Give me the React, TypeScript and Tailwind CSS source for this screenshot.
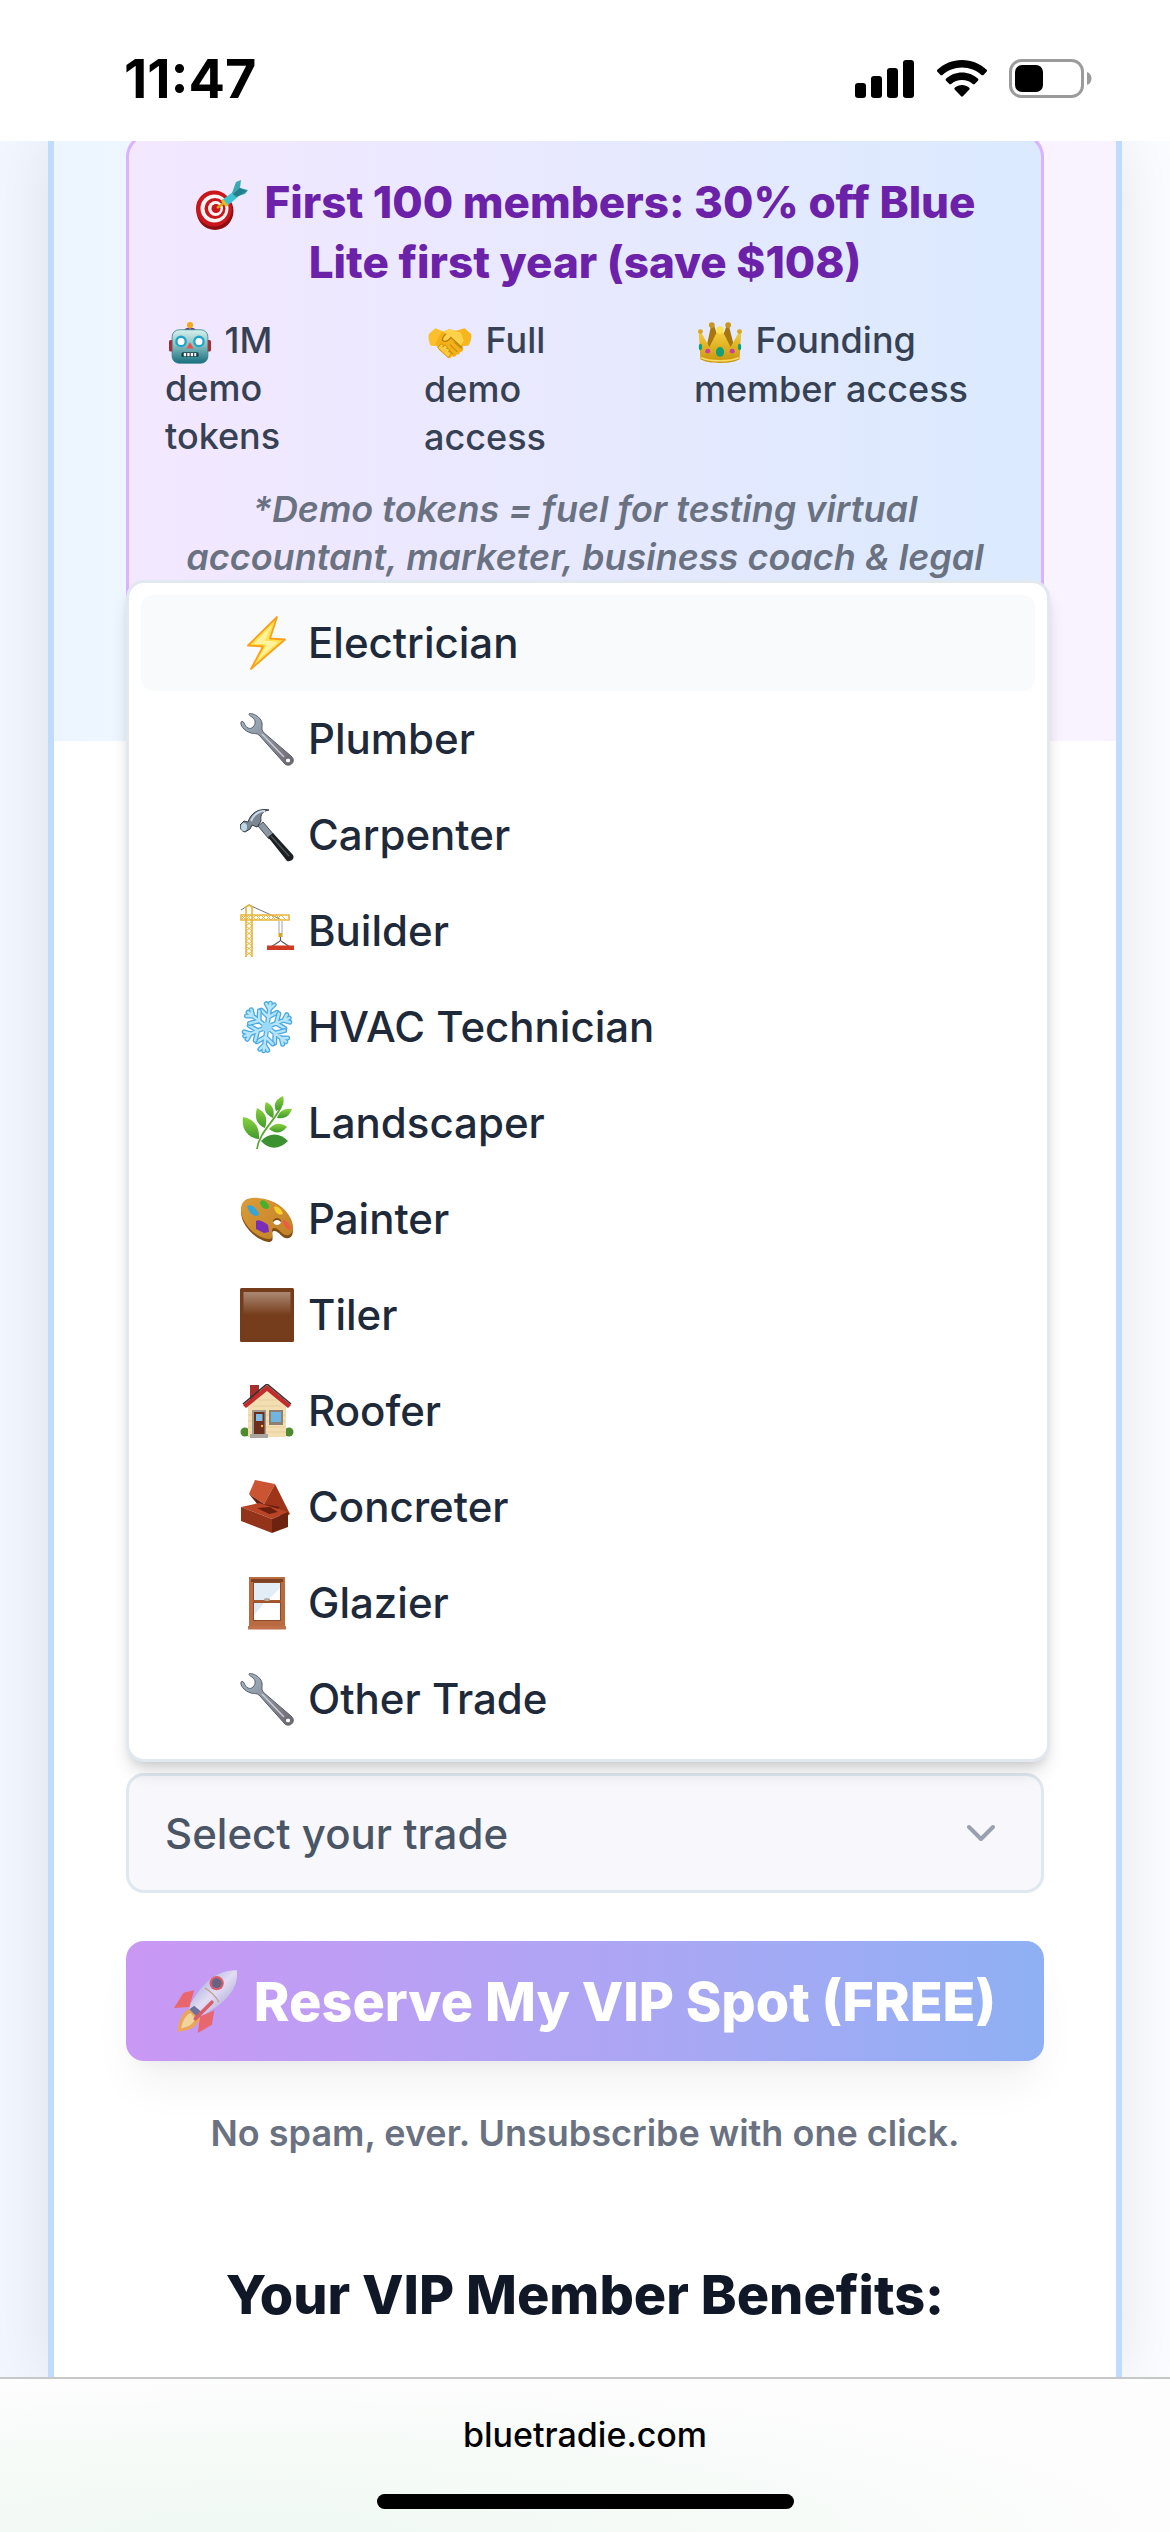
import type { ReactNode } from "react";
import { ChevronDown } from "lucide-react";

/* ---------- Pictograms (54 x 54 drawing grid) ---------- */

function Art({ className, children }: { className: string; children: ReactNode }) {
  return (
    <svg viewBox="0 0 54 54" className={className} aria-hidden="true">
      {children}
    </svg>
  );
}

const itemArt = "size-[54px] shrink-0";

function Target() {
  return (
    <Art className="mr-4 inline-block size-[54px] -my-2 align-middle">
      <ellipse cx="20" cy="32" rx="18.5" ry="19" fill="#8d0d10" />
      <ellipse cx="19" cy="29.500" rx="18" ry="18" fill="#c9151b" />
      <ellipse cx="19.500" cy="29.500" rx="14" ry="14" fill="#f7f4f4" />
      <ellipse cx="20" cy="29.500" rx="10.500" ry="10.500" fill="#c9151b" />
      <ellipse cx="20.500" cy="29.500" rx="7.500" ry="7.500" fill="#f7f4f4" />
      <ellipse cx="21" cy="29.500" rx="4.500" ry="4.500" fill="#c9151b" />
      <path d="M22 29l7-5" stroke="#d9a514" strokeWidth="2.500" />
      <path d="M27 21l5 6 11-9-5-5z" fill="#3cc4d3" />
      <path d="M26 22l5 6 2-2-5-6z" fill="#e8b923" />
      <path d="M37 14l4-11 5-2-1 8 8 2-3 4-10 3z" fill="#3aa9b4" />
      <path d="M38 15l7-6 7 3-10 6z" fill="#257e8b" />
    </Art>
  );
}

function Robot() {
  return (
    <Art className="mx-1 inline-block size-[42px] align-middle">
      <defs>
        <linearGradient id="robotHead" x1="0" y1="0" x2="0" y2="1">
          <stop offset="0" stopColor="#d6f1ee" />
          <stop offset="0.45" stopColor="#8ac0c1" />
          <stop offset="1" stopColor="#17707f" />
        </linearGradient>
      </defs>
      <rect x="0" y="23" width="6" height="15" rx="2" fill="#b5262b" />
      <rect x="48" y="23" width="6" height="15" rx="2" fill="#b5262b" />
      <ellipse cx="27" cy="10" rx="7" ry="3" fill="#56457c" />
      <rect x="25.500" y="5" width="3" height="5" fill="#8a6aa0" />
      <circle cx="27" cy="4" r="4" fill="#f7a81c" />
      <rect x="4" y="10" width="46" height="43" rx="9" fill="url(#robotHead)" stroke="#2d7c86" strokeWidth="1" />
      <circle cx="15.500" cy="25" r="6" fill="#fff" stroke="#22a4c9" strokeWidth="3" />
      <circle cx="38.500" cy="25" r="6" fill="#fff" stroke="#22a4c9" strokeWidth="3" />
      <path d="M27 26l4.500 8h-9z" fill="#e5534f" />
      <rect x="16" y="39" width="22" height="6" rx="2" fill="#173f49" />
      <path d="M19 42h16" stroke="#fff" strokeWidth="4" strokeDasharray="3 1.500" />
    </Art>
  );
}

function Handshake() {
  return (
    <Art className="mx-1 inline-block size-[44px] align-middle">
      <path d="M1 16l8-7 10 4-9 18-7-1C1 26 0 20 1 16z" fill="#fbc02b" />
      <path d="M53 16l-8-7-11 3 8 19 8-1c2-4 4-9 3-14z" fill="#f6b61d" />
      <path d="M9 28l5 8 11 9c2 1 4 0 4-2l2 1c2 0 4-1 4-3 2 1 5-1 4-3 3 0 5-2 4-5L38 13l-12-3-10 4z" fill="#f3b019" />
      <path d="M17 13l10-3 13 4 4 10-4 7-12-10c-4 4-9 5-11 2l5-8z" fill="#fdd24a" />
      <path d="M22 16c-4 3-5 7-4 8 3 2 7 0 10-4l14 13" fill="none" stroke="#b97908" strokeWidth="1.500" />
      <path d="M27 29l9 9M23 33l8 8M32 26l9 8" stroke="#c98a0c" strokeWidth="1.300" fill="none" />
      <path d="M12 33l3-4c2-2 5 0 3 3l2-2c3-1 4 2 3 4 3-1 4 2 2 4 3-1 4 2 2 4l-2 3z" fill="#fcca3b" stroke="#c98a0c" strokeWidth="1" />
    </Art>
  );
}

function Crown() {
  return (
    <Art className="mx-1 inline-block size-[44px] align-middle">
      <defs>
        <linearGradient id="crownGold" x1="0" y1="0" x2="0" y2="1">
          <stop offset="0" stopColor="#f7d33e" />
          <stop offset="1" stopColor="#c9930d" />
        </linearGradient>
      </defs>
      <path d="M10 34L16 6h4l7 22 8-22h3l7 28z" fill="#a87510" />
      <path d="M3 47L1 15l3-1 10 18L25 10h4l11 22 10-18 3 1-2 32c-8 6-40 6-48 0z" fill="url(#crownGold)" />
      <circle cx="3" cy="13" r="3" fill="#d9a520" />
      <circle cx="51" cy="13" r="3" fill="#d9a520" />
      <circle cx="17" cy="5" r="3.500" fill="#c9951a" />
      <circle cx="37" cy="5" r="3.500" fill="#c9951a" />
      <circle cx="27" cy="11" r="4.500" fill="#fbe34d" />
      <path d="M4 45c10 5 36 5 46 0" stroke="#f9dc62" strokeWidth="2" fill="none" />
      <ellipse cx="27" cy="38" rx="5" ry="6" fill="#149f77" />
      <circle cx="12" cy="37" r="3" fill="#c93fa2" />
      <circle cx="42" cy="37" r="3" fill="#c93fa2" />
      <ellipse cx="3" cy="32" rx="2" ry="4" fill="#149f77" />
      <ellipse cx="51" cy="32" rx="2" ry="4" fill="#149f77" />
    </Art>
  );
}

function Bolt() {
  return (
    <Art className={itemArt}>
      <path d="M37 1L8 29.500l15 1L11 53l34-29.500-15-1z" fill="#ffe04f" stroke="#f9a01b" strokeWidth="1.800" strokeLinejoin="round" />
      <path d="M32 9L14 27.500l13 1L18 44l20-18-13-1.500z" fill="#fff3a0" />
    </Art>
  );
}

function Wrench() {
  return (
    <Art className={itemArt}>
      <defs>
        <linearGradient id="wrenchSteel" x1="0" y1="0" x2="1" y2="1">
          <stop offset="0" stopColor="#a3b8c8" />
          <stop offset="0.5" stopColor="#8a8f9a" />
          <stop offset="1" stopColor="#71646c" />
        </linearGradient>
      </defs>
      <path
        fillRule="evenodd"
        d="M9 2c1-2 12 2 13 9 .500 4-1 6 1 9l28 24c6 5-1 12-6 8L19 23c-2-2-5-1-8-2C4 19 0 13 1 10c1-1 2-1 3 1 2 5 6 7 9 4 3-3 3-7-1-10C10 4 9 3 9 2zM48 46a2.500 2.500 0 1 0 .1 0z"
        fill="url(#wrenchSteel)"
        stroke="#555e69"
        strokeWidth="1"
      />
      <path d="M22 22l22 23" stroke="#c6ced7" strokeWidth="1.500" />
    </Art>
  );
}

function Hammer() {
  return (
    <Art className={itemArt}>
      <path d="M18 18l5-4 11 13-5 4z" fill="#8d97a3" stroke="#454d56" strokeWidth="1" />
      <path d="M28 29l5-4 20 22c2 4-2 7-6 6z" fill="#1c2022" />
      <path d="M31 28l18 20" stroke="#4d5356" strokeWidth="1.500" />
      <path d="M0 17l4-4 4 1C11 5 18 0 29 2c-6 1-9 4-8 11l-4 6-5-2-2 4-5 3c-4-1-5-4-5-7z" fill="#7c8793" stroke="#353c45" strokeWidth="1" />
      <path d="M11 13C14 6 19 3 25 3" stroke="#c9dbea" strokeWidth="2" fill="none" />
      <ellipse cx="4" cy="19" rx="3" ry="4" fill="#bdd7e8" />
    </Art>
  );
}

function Crane() {
  return (
    <Art className={itemArt}>
      <path d="M1 6l8-5 31 14" stroke="#777" strokeWidth="1" fill="none" />
      <g fill="none" stroke="#e8b53a" strokeWidth="1.600">
        <path d="M6 53V3l3-2 3 2v50M1 11h48v5H1z" />
        <path d="M6 17l6 5-6 5 6 5-6 5 6 5-6 5 6 5M12 17l-6 5 6 5-6 5 6 5-6 5 6 5-6 5" strokeWidth="1" />
        <path d="M1 11l5 5 5-5 5 5 5-5 5 5 5-5 5 5 5-5 5 5M1 16l5-5 5 5 5-5 5 5 5-5 5 5 5-5 5 5" strokeWidth="1" />
      </g>
      <path d="M39 17v12M42 17v12" stroke="#8a8a8a" strokeWidth="0.800" />
      <rect x="38.500" y="29" width="4" height="4" fill="#d0a528" />
      <path d="M40.500 33v4M40 37l-9 6M41 37l9 6" stroke="#5b5b5b" strokeWidth="1.200" />
      <rect x="27" y="41.500" width="27" height="4.500" fill="#d13a22" />
    </Art>
  );
}

function Snowflake() {
  return (
    <Art className={itemArt}>
      {[8, 68, 128, 188, 248, 308].map((angle) => (
        <g key={angle} transform={`rotate(${angle} 27 27)`} strokeLinecap="round" fill="none">
          <path d="M27 27V3M27 17l-8-6M27 17l8-6M27 9l-4-5M27 9l4-5" stroke="#4aa9e2" strokeWidth="5" />
          <path d="M27 27V3M27 17l-8-6M27 17l8-6M27 9l-4-5M27 9l4-5" stroke="#b5e5fb" strokeWidth="2.400" />
        </g>
      ))}
      <circle cx="27" cy="27" r="5" fill="#9ad9f8" />
    </Art>
  );
}

function Herb() {
  return (
    <Art className={itemArt}>
      <defs>
        <linearGradient id="herbLeaf" x1="0" y1="0" x2="0" y2="1">
          <stop offset="0" stopColor="#8bd13f" />
          <stop offset="1" stopColor="#3f9a2c" />
        </linearGradient>
      </defs>
      <path d="M17 53c2-16 16-26 24-42" stroke="#5aa832" strokeWidth="1.800" fill="none" />
      <g fill="url(#herbLeaf)">
        <path d="M43 0c2 8-1 13-7 15-3-7 0-12 7-15z" />
        <path d="M26 6c7 3 9 9 7 16-7-3-10-8-7-16z" />
        <path d="M52 13c-3 8-8 10-15 9 2-7 8-10 15-9z" />
        <path d="M17 12c9 4 11 11 8 20-8-3-11-10-8-20z" />
        <path d="M47 31c-6 7-12 7-18 2 5-6 12-7 18-2z" />
        <path d="M3 21c11 2 17 10 16 22C8 42 1 33 3 21z" />
        <path d="M48 45c-9 9-19 9-27 0 9-9 19-8 27 0z" fill="#3c9130" />
      </g>
    </Art>
  );
}

function Palette() {
  return (
    <Art className={itemArt}>
      <defs>
        <linearGradient id="paletteWood" x1="0" y1="0" x2="1" y2="1">
          <stop offset="0" stopColor="#dc9c38" />
          <stop offset="1" stopColor="#c07f26" />
        </linearGradient>
      </defs>
      <path
        fillRule="evenodd"
        d="M1 19C1 9 8 6 18 7c16 1 28 10 33 21 3 7 3 15-2 17-7 2-9-7-15-7-5 1 2 9-4 11C18 49 1 33 1 19zM37 27a4 3.500 0 1 0 .1 0z"
        fill="#7f4e14"
        transform="translate(0 1)"
      />
      <path
        fillRule="evenodd"
        d="M1 18C1 8 8 5 18 6c16 1 28 10 33 21 3 7 3 14-2 16-7 2-9-7-15-7-5 1 2 9-4 11C18 48 1 32 1 18zM37 26a4 3.500 0 1 0 .1 0z"
        fill="url(#paletteWood)"
      />
      <path d="M7 14c5-3 10 3 12 8-3 5-10 0-12-8z" fill="#36a5d8" />
      <path d="M20 10c3-4 7 0 9 4 0 5-8 4-9-4z" fill="#43b02f" />
      <path d="M34 15c4-2 8 3 9 7-4 2-8-1-9-7z" fill="#f4cf2e" />
      <path d="M16 29c3-2 8 1 12 4l1 7-5 1-8-4z" fill="#7a2db6" />
      <path d="M43 28c3-1 7 5 8 9-4 2-8-4-8-9z" fill="#ef5a45" />
    </Art>
  );
}

function BrownTile() {
  return (
    <Art className={itemArt}>
      <defs>
        <linearGradient id="tileShine" x1="0" y1="0" x2="0" y2="1">
          <stop offset="0" stopColor="#ab8873" />
          <stop offset="0.5" stopColor="#753d1b" />
        </linearGradient>
      </defs>
      <rect x="0" y="0" width="54" height="54" rx="1.500" fill="#743c1a" />
      <rect x="3.500" y="4" width="47" height="46" fill="url(#tileShine)" />
    </Art>
  );
}

function House() {
  return (
    <Art className={itemArt}>
      <circle cx="5" cy="48" r="4.500" fill="#4f8a2d" />
      <circle cx="49" cy="48" r="4.500" fill="#4f8a2d" />
      <rect x="10" y="1" width="9" height="16" fill="#a52f2c" />
      <path d="M8 53V21L27 4l19 17v32z" fill="#f3deb2" />
      <path d="M8 31h38M8 37h38M8 43h38M8 48h38M13 22h28M18 16h18" stroke="#e0c894" strokeWidth="0.700" />
      <path d="M3 21L27 1l24 20-3 3L27 7 6 24z" fill="#c32c2d" />
      <path d="M3 20L27 0l24 20" stroke="#37302f" strokeWidth="1.600" fill="none" />
      <rect x="12" y="26" width="14" height="25" fill="#a59a8e" />
      <rect x="14" y="28" width="10.500" height="22" fill="#6d2f1d" />
      <rect x="16" y="30" width="6.500" height="7" fill="#7cc1ea" />
      <circle cx="22" cy="42" r="1.200" fill="#f3b83a" />
      <rect x="29" y="26" width="14" height="15" fill="#8f8074" />
      <rect x="31" y="28" width="10" height="10" fill="#6fb5e0" />
      <rect x="10" y="50" width="18" height="4" fill="#aaa69f" />
    </Art>
  );
}

function Bricks() {
  return (
    <Art className={itemArt}>
      <path d="M15 0l20 4-11 20L9 14z" fill="#cb5433" />
      <path d="M35 4l15 30-6 4-20-14z" fill="#9f3518" />
      <path d="M9 14l15 10 16 3-8 8-14-10z" fill="#6b1e0e" />
      <path d="M1 27l18-4 29 9-16 7z" fill="#ba4526" />
      <path d="M1 27l31 12v14L1 41z" fill="#92331a" />
      <path d="M32 39l16-7v15l-16 6z" fill="#6d2310" />
      <path d="M17 28l13-1 8 5-9 2z" fill="#6b1e0e" />
    </Art>
  );
}

function WindowFrame() {
  return (
    <Art className={itemArt}>
      <rect x="9" y="1" width="36" height="50" fill="#b86a40" />
      <rect x="11" y="3" width="32" height="3" fill="#7e4122" />
      <rect x="13" y="6" width="28" height="39" fill="#8a4b2a" />
      <rect x="14" y="7" width="26" height="17" fill="#e3edf5" />
      <path d="M40 12v12H28z" fill="#fff" />
      <rect x="14" y="27" width="26" height="17" fill="#fff" />
      <path d="M14 27h10L14 39z" fill="#dde9f3" />
      <rect x="13" y="24" width="28" height="2.500" fill="#a5592f" />
      <ellipse cx="27" cy="23.500" rx="3" ry="1.500" fill="#b4aaa2" />
      <rect x="8" y="50" width="38" height="3.500" fill="#c0714a" />
    </Art>
  );
}

function Rocket() {
  return (
    <Art className="size-[64px] shrink-0 opacity-75">
      <defs>
        <linearGradient id="rocketBody" x1="0" y1="0" x2="1" y2="1">
          <stop offset="0" stopColor="#6f9ac4" />
          <stop offset="0.5" stopColor="#eef2f5" />
          <stop offset="1" stopColor="#7f96b4" />
        </linearGradient>
      </defs>
      <path d="M17 18L8 20 0 33l13-1z" fill="#f4573f" />
      <path d="M34 35l-2 12-12 7 2-14z" fill="#f4573f" />
      <path d="M14 33C6 37 4 44 3 53c9-1 16-3 19-11z" fill="#f7a928" />
      <path d="M14 37c-5 3-7 8-8 13 6-1 10-3 12-8z" fill="#ffe680" />
      <path d="M53 1c-16 0-27 8-39 28l-1 5 7 6 6-2C44 28 55 16 53 1z" fill="url(#rocketBody)" />
      <path d="M26 16c4 2 10 8 12 12" stroke="#b99c62" strokeWidth="1" fill="none" />
      <path d="M13 34l4-3 6 5-4 4z" fill="#50637a" />
      <circle cx="36" cy="12" r="6" fill="#e14b43" />
      <circle cx="36" cy="12" r="4.200" fill="#48525e" />
      <path d="M32 28l-14 14" stroke="#e0483a" strokeWidth="3" strokeLinecap="round" />
    </Art>
  );
}

/* ---------- Data ---------- */

const trades = [
  { name: "Electrician", Icon: Bolt },
  { name: "Plumber", Icon: Wrench },
  { name: "Carpenter", Icon: Hammer },
  { name: "Builder", Icon: Crane },
  { name: "HVAC Technician", Icon: Snowflake },
  { name: "Landscaper", Icon: Herb },
  { name: "Painter", Icon: Palette },
  { name: "Tiler", Icon: BrownTile },
  { name: "Roofer", Icon: House },
  { name: "Concreter", Icon: Bricks },
  { name: "Glazier", Icon: WindowFrame },
  { name: "Other Trade", Icon: Wrench },
];

/* ---------- Sections ---------- */

function StatusBar() {
  return (
    <header className="relative z-20 flex h-[141px] shrink-0 items-center justify-between bg-white pt-4 pr-[78px] pl-[124px] text-black">
      <span className="text-[54px] leading-[60px] font-bold">11:47</span>
      <div className="flex items-center gap-[22px]">
        <svg viewBox="0 0 60 38" className="h-[38px] w-[60px]" aria-hidden="true">
          <rect x="0" y="23" width="11" height="15" rx="3" />
          <rect x="16" y="16" width="11" height="22" rx="3" />
          <rect x="32" y="8" width="11" height="30" rx="3" />
          <rect x="48" y="0" width="11" height="38" rx="3" />
        </svg>
        <svg viewBox="0 0 50 37" className="h-[37px] w-[50px]" aria-hidden="true">
          <path d="M25 0C15.500 0 7 3.600.6 9.600c-.8.700-.8 1.500-.1 2.200l3 3.100c.7.600 1.300.6 2 0C10.700 10.300 17.500 7.500 25 7.500s14.300 2.800 19.500 7.400c.7.600 1.300.6 2 0l3-3.100c.7-.7.7-1.500-.1-2.200C43 3.600 34.500 0 25 0z" />
          <path d="M25 12.500c-6 0-11.600 2.300-15.800 6-.8.700-.8 1.500-.1 2.200l3.200 3.200c.6.600 1.200.6 1.900 0C17 21.500 20.800 20 25 20s8 1.500 10.800 3.900c.7.600 1.300.6 1.900 0l3.200-3.200c.7-.7.7-1.500-.1-2.200-4.200-3.700-9.800-6-15.800-6z" />
          <path d="M25 25c-2.700 0-5.100 1-7 2.500-.8.700-.8 1.500-.1 2.200l6 6.400c.7.700 1.500.7 2.200 0l6-6.400c.7-.7.7-1.500-.1-2.200C30.100 26 27.700 25 25 25z" />
        </svg>
        <svg viewBox="0 0 83 39" className="h-[39px] w-[83px]" aria-hidden="true">
          <rect x="1.500" y="1.500" width="72" height="36" rx="11" fill="none" stroke="#9b9b9b" strokeWidth="3" />
          <rect x="6" y="6" width="28" height="27" rx="7" />
          <path d="M78 13c6 2 6 11 0 13z" fill="#9b9b9b" />
        </svg>
      </div>
    </header>
  );
}

function Offer() {
  return (
    <section className="bg-linear-to-r from-[#edf6ff] to-[#f9f3ff] px-18 pb-[73px]">
      <div className="-mt-2 rounded-3xl border-3 border-purple-300 bg-linear-to-r from-purple-100 to-blue-100 px-9 pt-9 pb-21">
        <h2 className="px-6 text-center text-[44px] leading-[60px] font-extrabold text-[#6b21a8]">
          <Target />
          First 100 members: 30% off Blue Lite first year (save $108)
        </h2>
        <ul className="mt-6 grid grid-cols-[259fr_270fr_311fr] text-4xl leading-[48px] font-medium text-gray-700">
          <li className="pr-30">
            <Robot /> 1M demo tokens
          </li>
          <li className="pr-30">
            <Handshake /> Full demo access
          </li>
          <li>
            <Crown /> Founding member access
          </li>
        </ul>
        <p className="mt-6 text-center text-4xl leading-[48px] font-semibold text-gray-500 italic">
          *Demo tokens = fuel for testing virtual accountant, marketer, business coach &amp; legal
        </p>
      </div>
    </section>
  );
}

function TradeMenu() {
  return (
    <ul
      role="listbox"
      aria-label="Trades"
      className="absolute bottom-full left-0 z-10 mb-[11px] w-[calc(100%+6px)] rounded-[18px] border-3 border-slate-200 bg-white p-3 shadow-[0_12px_18px_-3px_rgba(0,0,0,0.14),0_6px_12px_-6px_rgba(0,0,0,0.14)]"
    >
      {trades.map(({ name, Icon }, index) => (
        <li key={name} role="option" aria-selected={index === 0}>
          <button
            type="button"
            className={
              index === 0
                ? "flex h-24 w-full items-center gap-3.5 rounded-xl bg-slate-50 pl-[99px] text-left text-[42px] leading-[60px] font-medium text-gray-800"
                : "flex h-24 w-full items-center gap-3.5 rounded-xl pl-[99px] text-left text-[42px] leading-[60px] font-medium text-gray-800"
            }
          >
            <Icon />
            {name}
          </button>
        </li>
      ))}
    </ul>
  );
}

function SignupForm() {
  return (
    <form className="px-18 pt-[1032px]">
      <div className="relative">
        <select
          aria-label="Trade"
          defaultValue=""
          className="block h-[120px] w-full appearance-none rounded-[18px] border-3 border-[#dfe7ef] bg-[#f7f7fc] px-9 text-[42px] font-medium text-gray-600"
        >
          <option value="">Select your trade</option>
          {trades.map(({ name }) => (
            <option key={name}>{name}</option>
          ))}
        </select>
        <ChevronDown className="pointer-events-none absolute top-9 right-[39px] size-12 text-gray-400" />
        <TradeMenu />
      </div>
      <button
        type="button"
        className="mt-12 flex h-[120px] w-full items-center justify-center gap-4 rounded-[18px] bg-linear-to-r from-[#c998f4] to-[#8fb0f4] text-[54px] font-extrabold whitespace-nowrap text-white shadow-[0_30px_45px_-9px_rgba(0,0,0,0.06),0_12px_18px_-12px_rgba(0,0,0,0.06)]"
      >
        <Rocket />
        Reserve My VIP Spot (FREE)
      </button>
      <p className="mt-12 text-center text-4xl leading-[48px] font-semibold text-gray-500">
        No spam, ever. Unsubscribe with one click.
      </p>
      <h3 className="mt-24 pb-10 text-center text-[54px] leading-[84px] font-extrabold text-gray-900">
        Your VIP Member Benefits:
      </h3>
    </form>
  );
}

function BrowserBar() {
  return (
    <footer className="relative z-20 flex h-[156px] shrink-0 flex-col items-center justify-between border-t-2 border-[#c6c8c8] bg-white bg-radial-[at_22%_100%] from-[#f0f9f4] via-[#f8fbf9] to-[#fdfdfd] to-70% pt-[32px] pb-6">
      <a href="#top" className="text-[34px] leading-[48px] font-medium text-black">
        bluetradie.com
      </a>
      <div className="h-[15px] w-[417px] rounded-full bg-black" />
    </footer>
  );
}

export default function App() {
  return (
    <div className="flex min-h-screen flex-col bg-white font-[Inter,sans-serif]">
      <StatusBar />
      <main className="flex flex-1 flex-col overflow-hidden bg-linear-to-r from-[#f1f6ff] to-[#fbfcff] px-12">
        <div className="flex-1 border-x-6 border-[#bfdbfe] bg-white shadow-[0_0_60px_rgba(0,0,0,0.09)]">
          <Offer />
          <SignupForm />
        </div>
      </main>
      <BrowserBar />
    </div>
  );
}
